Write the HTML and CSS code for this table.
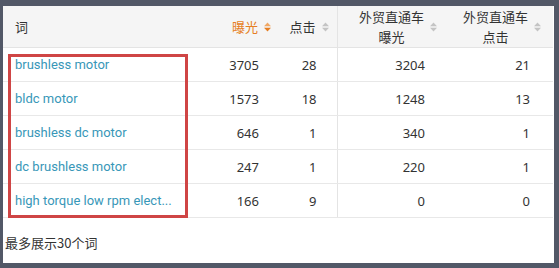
FILE: index.html
```html
<!DOCTYPE html>
<html lang="zh">
<head>
<meta charset="utf-8">
<link rel="stylesheet" href="styles.css">
</head>
<body>
<div class="panel">
  <table class="kw-table">
    <colgroup>
      <col class="c-word"><col class="c-exp"><col class="c-clk"><col class="c-pexp"><col class="c-pclk">
    </colgroup>
    <thead>
      <tr>
        <th class="th-word">词</th>
        <th><div class="th-in active"><span class="th-text">曝光</span><svg class="sort" width="7" height="10" viewBox="0 0 7 10"><path class="up" d="M0 4.2L3.5 0.5L7 4.2Z"/><path class="down" d="M0 5.8L3.5 9.5L7 5.8Z"/></svg></div></th>
        <th><div class="th-in"><span class="th-text">点击</span><svg class="sort" width="7" height="10" viewBox="0 0 7 10"><path class="up" d="M0 4.2L3.5 0.5L7 4.2Z"/><path class="down" d="M0 5.8L3.5 9.5L7 5.8Z"/></svg></div></th>
        <th class="sep"><div class="th-in"><span class="th-text">外贸直通车<br>曝光</span><svg class="sort" width="7" height="10" viewBox="0 0 7 10"><path class="up" d="M0 4.2L3.5 0.5L7 4.2Z"/><path class="down" d="M0 5.8L3.5 9.5L7 5.8Z"/></svg></div></th>
        <th><div class="th-in last"><span class="th-text">外贸直通车<br>点击</span><svg class="sort" width="7" height="10" viewBox="0 0 7 10"><path class="up" d="M0 4.2L3.5 0.5L7 4.2Z"/><path class="down" d="M0 5.8L3.5 9.5L7 5.8Z"/></svg></div></th>
      </tr>
    </thead>
    <tbody>
      <tr><td class="word"><a href="#">brushless motor</a></td><td class="num">3705</td><td class="num">28</td><td class="num sep">3204</td><td class="num last">21</td></tr>
      <tr><td class="word"><a href="#">bldc motor</a></td><td class="num">1573</td><td class="num">18</td><td class="num sep">1248</td><td class="num last">13</td></tr>
      <tr><td class="word"><a href="#">brushless dc motor</a></td><td class="num">646</td><td class="num">1</td><td class="num sep">340</td><td class="num last">1</td></tr>
      <tr><td class="word"><a href="#">dc brushless motor</a></td><td class="num">247</td><td class="num">1</td><td class="num sep">220</td><td class="num last">1</td></tr>
      <tr><td class="word"><a href="#">high torque low rpm elect...</a></td><td class="num">166</td><td class="num">9</td><td class="num sep">0</td><td class="num last">0</td></tr>
    </tbody>
  </table>
  <div class="footer">最多展示30个词</div>
  <div class="highlight"></div>
</div>
</body>
</html>
```
FILE: styles.css
```css
html, body {
  margin: 0;
  padding: 0;
}
body {
  background: #525867;
  padding: 6px 5px 5px 3px;
  font-family: "Noto Sans", "Noto Sans CJK SC", sans-serif;
  font-size: 13px;
  color: #333;
}
.panel {
  position: relative;
  background: #fff;
  height: 257px;
}
.kw-table {
  border-collapse: collapse;
  width: 550px;
  table-layout: fixed;
}
.c-word { width: 187px; }
.c-exp { width: 89px; }
.c-clk { width: 58px; }
.c-pexp { width: 108px; }
.c-pclk { width: 108px; }
.kw-table th {
  background: #f5f5f5;
  height: 41px;
  padding: 0 8px 0 0;
  border-bottom: 1px solid #e4e4e4;
  font-weight: normal;
  font-family: "Noto Sans CJK SC", sans-serif;
  font-size: 13px;
  color: #333;
  text-align: right;
}
.kw-table th.th-word {
  text-align: left;
  padding-left: 12px;
}
.kw-table .sep {
  border-left: 1px solid #e4e4e4;
}
.th-in {
  display: flex;
  align-items: center;
  justify-content: flex-end;
  gap: 6px;
}
.th-in.last { padding-right: 4px; }
.th-text {
  text-align: center;
  line-height: 20px;
}
.sort .up, .sort .down { fill: #c4c4c4; }
.th-in.active .th-text { color: #e67e22; }
.th-in.active .sort .up { fill: #f0a866; }
.th-in.active .sort .down { fill: #e67e22; }
.kw-table td {
  height: 33px;
  padding: 0;
  border-bottom: 1px solid #e8e8e8;
}
.kw-table td.word {
  padding-left: 12px;
  font-family: "Roboto", sans-serif;
  white-space: nowrap;
  overflow: hidden;
}
.kw-table td.word a {
  color: #3897b8;
  text-decoration: none;
}
.kw-table td.num {
  text-align: right;
  padding-right: 20px;
}
.kw-table td.num.last { padding-right: 23px; }
.footer {
  padding-left: 2px;
  margin-top: 15px;
  line-height: 20px;
  font-family: "Noto Sans CJK SC", sans-serif;
}
.highlight {
  position: absolute;
  left: 5px;
  top: 48px;
  width: 174px;
  height: 158px;
  border: 3px solid #cf4545;
  pointer-events: none;
}
```
